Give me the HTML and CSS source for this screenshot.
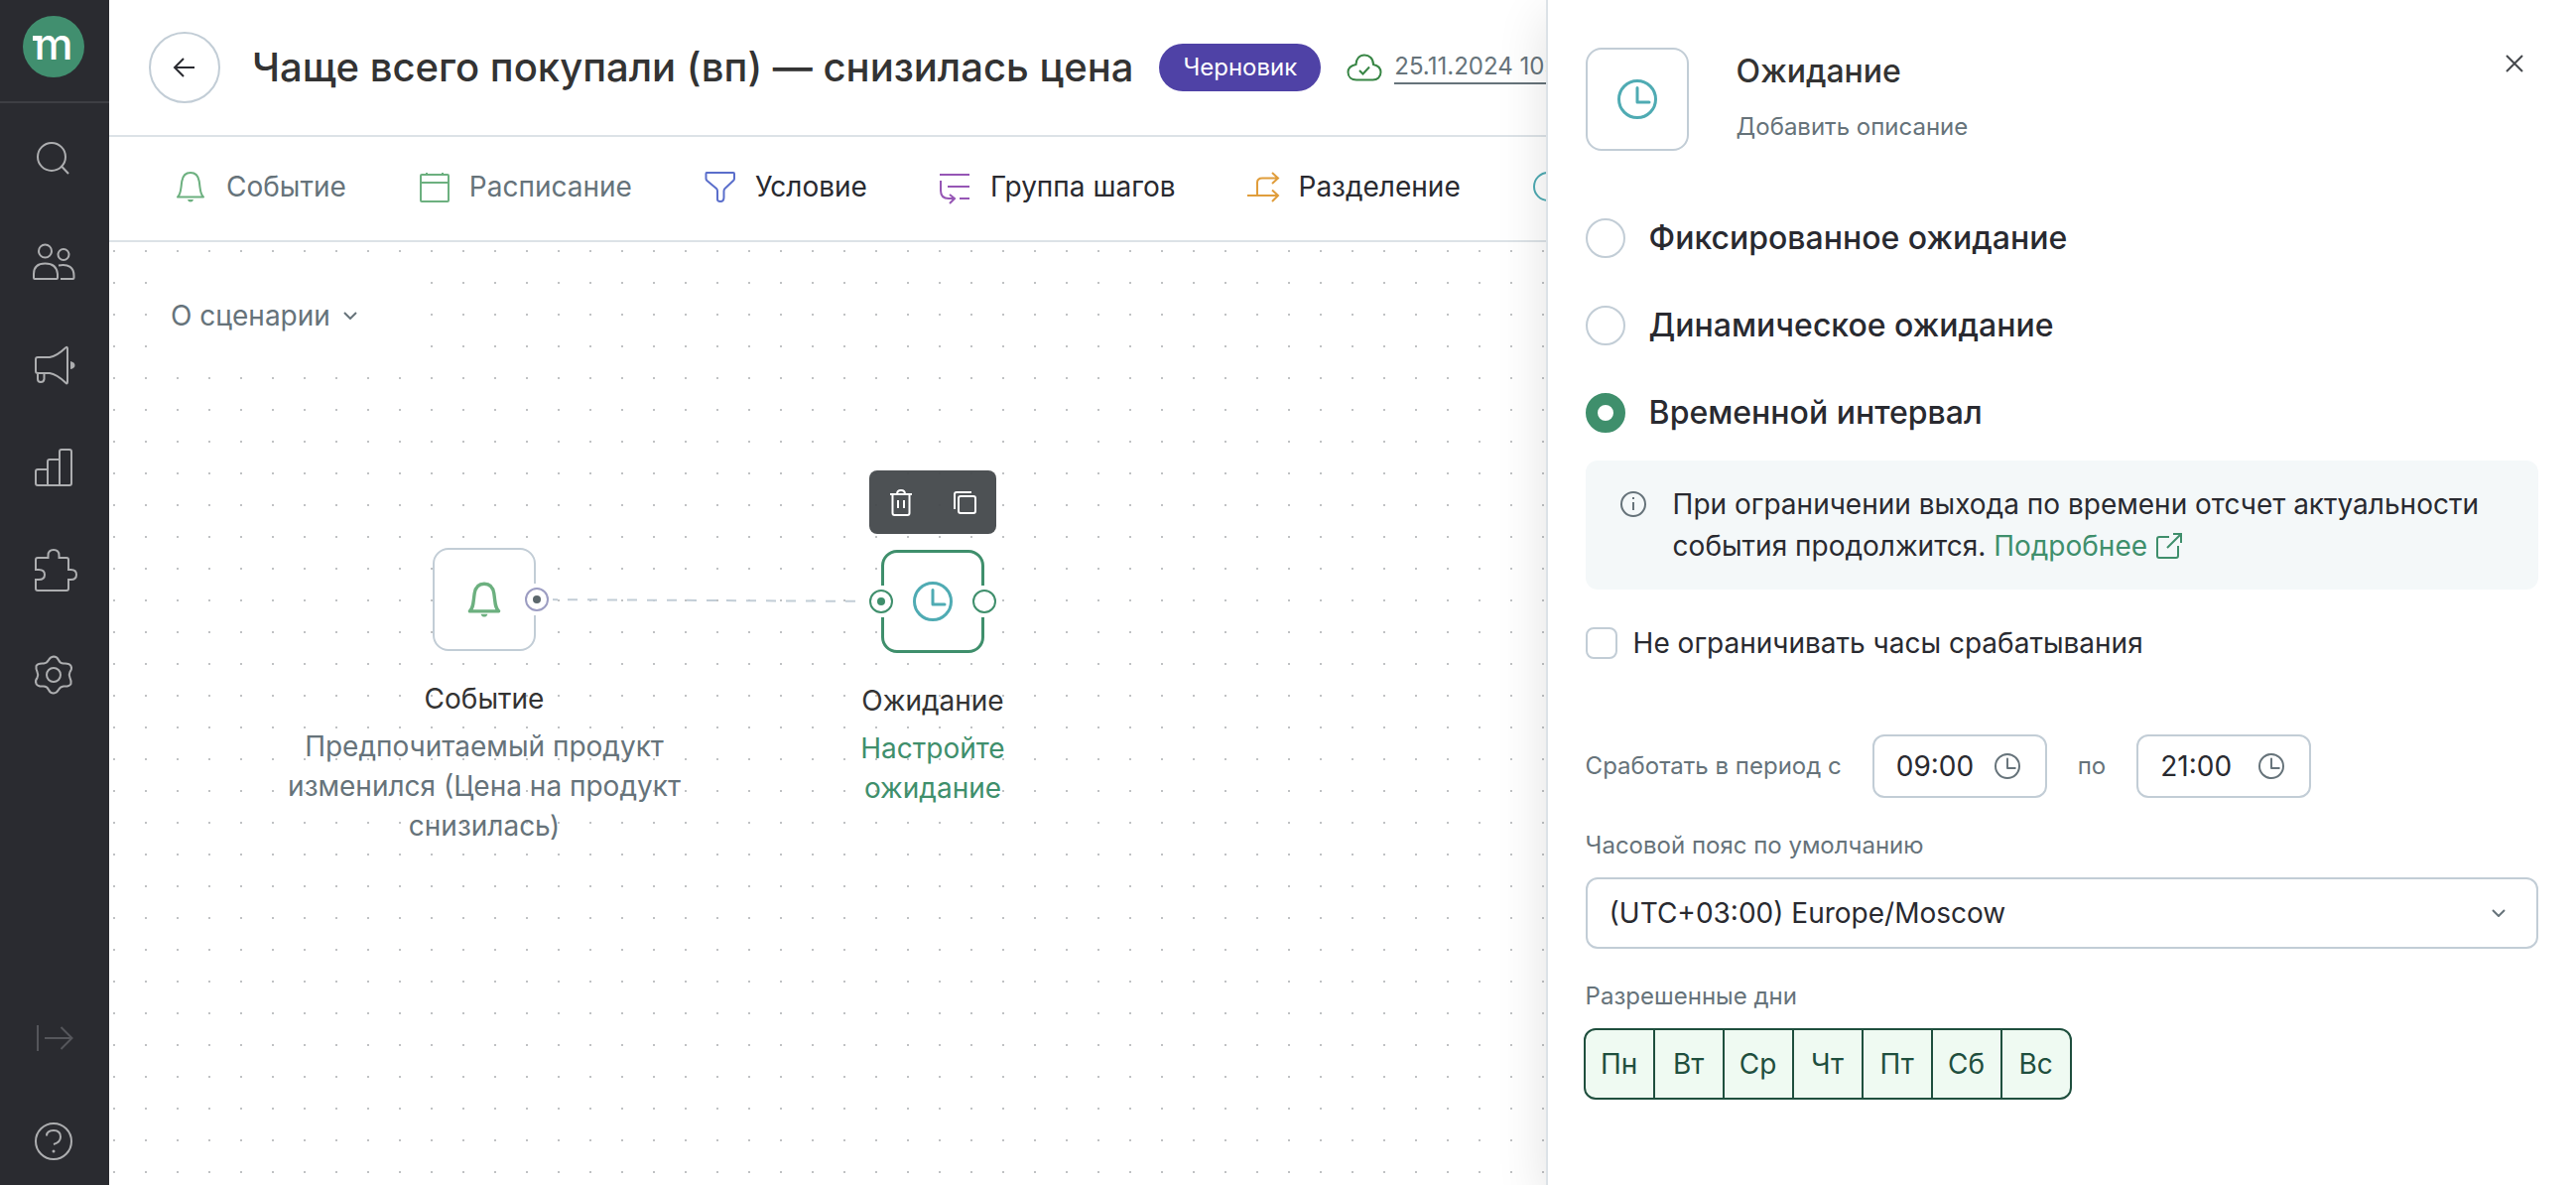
FILE: index.html
```html
<!DOCTYPE html>
<html lang="ru">
<head>
<meta charset="utf-8">
<meta name="viewport" content="width=device-width, initial-scale=1">
<title>Чаще всего покупали (вп) — снизилась цена</title>
<link rel="stylesheet" href="styles.css">
</head>
<body>
<svg class="defs" aria-hidden="true">
  <symbol id="clock" viewBox="0 0 40 40">
    <circle cx="20" cy="20" r="18.5" stroke-width="3"/>
    <path d="M20 8.500V23H32" stroke-width="3" stroke-linecap="round" stroke-linejoin="round"/>
  </symbol>
  <symbol id="bell" viewBox="0 0 32 32">
    <path d="M3 26.500H29C25.500 23.500 26 19 24.700 10.500C23.800 5 21 2 16 2S8.200 5 7.300 10.500C6 19 6.500 23.500 3 26.500Z" stroke-linejoin="round"/>
    <path d="M13 29H19Q18.500 31.500 16 31.500T13 29Z" fill="currentColor" stroke="none"/>
  </symbol>
  <symbol id="chevron" viewBox="0 0 14 8">
    <path d="M1 1L7 7L13 1" stroke-width="2"/>
  </symbol>
</svg>

<div class="app">
  <aside class="sidebar">
    <a class="logo" href="#" aria-label="Главная">
      <svg viewBox="0 0 62 62" width="62" height="62">
        <circle cx="31" cy="31" r="31" class="logo-disc"/>
        <text x="31" y="44" class="logo-letter">m</text>
        <rect x="10" y="20" width="8" height="5" class="logo-serif"/>
      </svg>
    </a>
    <nav class="nav">
      <a href="#" aria-label="Поиск"><svg viewBox="0 0 44 44"><circle cx="20" cy="20" r="14"/><path d="M29.500 29L37 37"/></svg></a>
      <a href="#" aria-label="Клиенты"><svg viewBox="0 0 44 44"><circle cx="13.500" cy="11" r="6.500"/><circle cx="32" cy="14.500" r="5.500"/><path d="M2 38V34Q2 23.500 13.500 23.500T26 34V38Q26 39 25 39H3Q2 39 2 38ZM27 25.500Q42.500 23 42.500 36V38Q42.500 39 41.500 39H29"/></svg></a>
      <a href="#" aria-label="Кампании"><svg viewBox="0 0 44 44"><path d="M4 16Q4 14 6 14H18Q25 13 34 4.500Q36 3 36 5V39Q36 41.500 34 39.500Q25 31 18 30H6Q4 30 4 28ZM6 30V36Q6 39 9 39T12.500 36V30"/><path d="M39 18Q43.500 19 43.500 22T39 26Z" class="solid"/></svg></a>
      <a href="#" aria-label="Отчёты"><svg viewBox="0 0 44 44"><path d="M4 25Q4 23 6 23H16V15Q16 13 18 13H28V5Q28 3 30 3H38Q40 3 40 5V37Q40 39 38 39H6Q4 39 4 37ZM16 23V39M28 13V39"/></svg></a>
      <a href="#" aria-label="Интеграции"><svg viewBox="0 0 44 44"><path d="M6 8H16.500V5.500Q16.500 0 22 0T27.500 5.500V8H35Q37 8 37 10V20H39.500Q45 20 45 25T39.500 30H37V39Q37 41 35 41H6Q4 41 4 39V30H7Q13 30 13 25T7 20H4V10Q4 8 6 8Z"/></svg></a>
      <a href="#" aria-label="Настройки"><svg viewBox="0 0 44 44"><circle cx="22" cy="22" r="7"/><path d="M22 3.500Q25.500 3.500 27 7T32 10.500Q38 10 39.500 13T38.500 19Q37 22 38.500 25T39.500 31Q38 34 32 33.500Q28.500 34 27 37T22 40.500Q18.500 40.500 17 37T12 33.500Q6 34 4.500 31T5.500 25Q7 22 5.500 19T4.500 13Q6 10 12 10.500Q15.500 10 17 7T22 3.500Z"/></svg></a>
    </nav>
    <nav class="nav nav-bottom">
      <a href="#" class="dim" aria-label="Развернуть меню"><svg viewBox="0 0 44 44"><path d="M6 9V35M13 22H40M29.500 11L40.500 22L29.500 33"/></svg></a>
      <a href="#" aria-label="Помощь"><svg viewBox="0 0 44 44"><circle cx="22" cy="22" r="18"/><path d="M15 16.500Q15 11 22 11T29 17.500Q29 23 22 25"/><circle cx="22" cy="32" r="1.500" class="solid"/></svg></a>
    </nav>
  </aside>

  <main class="main">
    <header class="header">
      <button class="back" aria-label="Назад"><svg viewBox="0 0 24 20" width="24" height="20"><path d="M22 10H2M11 1L2 10L11 19" stroke-width="2"/></svg></button>
      <h1 class="title">Чаще всего покупали (вп) — снизилась цена</h1>
      <span class="badge">Черновик</span>
      <div class="saved">
        <svg viewBox="0 0 36 28" width="36" height="28"><path d="M10 26.500H26.500C31 26.500 34.500 23.500 34.500 18.800C34.500 14.500 31.500 12 27 11C27 5 23 1.500 18 1.500S9.500 5.500 9.500 11C4.500 12 1.500 14.500 1.500 18.800C1.500 23.500 5 26.500 10 26.500ZM13 17L16.500 20.500L23 13.500" stroke-width="2"/></svg>
        <a href="#">25.11.2024 10:00</a>
      </div>
    </header>

    <div class="toolbar">
      <button class="tool muted"><svg class="green thin"><use href="#bell"/></svg>Событие</button>
      <button class="tool muted"><svg class="green" viewBox="0 0 32 32"><path d="M4 4H30Q31 4 31 5V30Q31 31 30 31H4Q3 31 3 30V5Q3 4 4 4ZM3 12H31M9 2V4M25 2V4" stroke-width="2"/></svg>Расписание</button>
      <button class="tool"><svg class="blue" viewBox="0 0 32 32"><path d="M3 2H30Q31 2 31 3V8Q31 9 30 10L21.500 18Q20.500 19 20.500 20.500V27Q20.500 31 17 31T14 28V20.500Q14 19 13 18L3.500 10Q2.500 9 2.500 8V3Q2.500 2 3 2Z" stroke-width="2"/></svg>Условие</button>
      <button class="tool"><svg class="purple" viewBox="0 0 32 32"><path d="M1 4H31M9 16H31M21 28H31M2 10V20Q2 28 10 28H16M11 24L16 28L11 33" stroke-width="2"/></svg>Группа шагов</button>
      <button class="tool"><svg class="orange" viewBox="0 0 32 32"><path d="M0 25H31M10 25V12Q10 7.500 15 7.500H31M25 2L31 7.500L25 13M25 19.500L31 25L25 31" stroke-width="2"/></svg>Разделение</button>
      <button class="tool"><svg class="teal" viewBox="0 0 32 32"><circle cx="16" cy="16" r="14" stroke-width="2"/><path d="M16 8V18H24" stroke-width="2"/></svg>Ожидание</button>
    </div>

    <div class="canvas">
      <button class="about">О сценарии <svg width="14" height="8"><use href="#chevron"/></svg></button>

      <svg class="edge" width="348" height="8" viewBox="0 0 348 8"><path d="M0 3L348 5" stroke-width="2" stroke-dasharray="10 10" stroke-dashoffset="8"/></svg>

      <div class="node node-event">
        <div class="card">
          <svg class="green bold" width="36" height="36"><use href="#bell"/></svg>
          <span class="port port-right linked"></span>
        </div>
        <div class="node-title">Событие</div>
        <div class="node-text">Предпочитаемый продукт изменился (Цена на продукт снизилась)</div>
      </div>

      <div class="node node-wait">
        <div class="card">
          <svg class="teal" width="40" height="40"><use href="#clock"/></svg>
          <span class="port port-left linked"></span>
          <span class="port port-right"></span>
        </div>
        <div class="node-title">Ожидание</div>
        <div class="node-text">Настройте ожидание</div>
        <div class="node-menu">
          <button aria-label="Удалить"><svg viewBox="0 0 24 28" width="24" height="28"><path d="M1 6H23M3.500 6V25Q3.500 27 5.500 27H18.500Q20.500 27 20.500 25V6M8 6Q8 2 12 2T16 6M9 12V20M15 12V20" stroke-width="2"/></svg></button>
          <button aria-label="Копировать"><svg viewBox="0 0 24 24" width="24" height="24"><path d="M2 19V4Q2 2 4 2H19" stroke-width="2"/><rect x="6" y="6" width="17" height="17" rx="2" stroke-width="2"/></svg></button>
        </div>
      </div>
    </div>
  </main>

  <section class="panel" aria-label="Ожидание">
    <div class="panel-head">
      <div class="panel-icon"><svg class="teal" width="40" height="40"><use href="#clock"/></svg></div>
      <div class="panel-names">
        <h2>Ожидание</h2>
        <p>Добавить описание</p>
      </div>
      <button class="close" aria-label="Закрыть"><svg viewBox="0 0 18 18" width="18" height="18"><path d="M1 1L17 17M17 1L1 17" stroke-width="2"/></svg></button>
    </div>

    <div class="modes">
      <label class="mode"><input type="radio" name="mode">Фиксированное ожидание</label>
      <label class="mode"><input type="radio" name="mode">Динамическое ожидание</label>
      <label class="mode"><input type="radio" name="mode" checked>Временной интервал</label>
    </div>

    <div class="note">
      <svg viewBox="0 0 28 28" width="28" height="28"><circle cx="14" cy="14" r="12" stroke-width="2"/><path d="M14 12V20M14 7V9" stroke-width="2"/></svg>
      <p>При ограничении выхода по времени отсчет актуальности события продолжится. <a href="#">Подробнее <svg viewBox="0 0 28 28" width="28" height="28"><path d="M14 5H4Q2 5 2 7V24Q2 26 4 26H21Q23 26 23 24V14M18 2H26V11M26 2L12 16" stroke-width="2"/></svg></a></p>
    </div>

    <label class="limit"><input type="checkbox">Не ограничивать часы срабатывания</label>

    <div class="period">
      <label for="from">Сработать в период с</label>
      <span class="time"><input id="from" type="text" value="09:00"><svg width="26" height="26"><use href="#clock"/></svg></span>
      <label for="to">по</label>
      <span class="time"><input id="to" type="text" value="21:00"><svg width="26" height="26"><use href="#clock"/></svg></span>
    </div>

    <div class="field">
      <label for="zone">Часовой пояс по умолчанию</label>
      <span class="select">
        <select id="zone"><option>(UTC+03:00) Europe/Moscow</option></select>
        <svg width="14" height="8"><use href="#chevron"/></svg>
      </span>
    </div>

    <div class="field">
      <span id="days-label">Разрешенные дни</span>
      <div class="days" role="group" aria-labelledby="days-label">
        <button aria-pressed="true">Пн</button>
        <button aria-pressed="true">Вт</button>
        <button aria-pressed="true">Ср</button>
        <button aria-pressed="true">Чт</button>
        <button aria-pressed="true">Пт</button>
        <button aria-pressed="true">Сб</button>
        <button aria-pressed="true">Вс</button>
      </div>
    </div>
  </section>
</div>
</body>
</html>
```
FILE: styles.css
```css
:root {
  --ink: #292a30;
  --title: #333333;
  --muted: #66737a;
  --line: #dce2e7;
  --border: #c2cdd6;
  --brand: #3f8f6c;
}

* { box-sizing: border-box; }

body {
  margin: 0;
  font: 28px/40px Inter, "Liberation Sans", sans-serif;
  color: var(--ink);
  background: #fff;
}

h1, h2, p { margin: 0; font-weight: inherit; }

button {
  font: inherit;
  color: inherit;
  background: none;
  border: 0;
  padding: 0;
}

a { color: inherit; text-decoration: none; }

svg { fill: none; stroke: currentColor; flex: none; display: block; }
.defs { position: absolute; width: 0; height: 0; }

.green { color: #6cb07f; }
.blue { color: #5a6ecb; }
.purple { color: #9656b5; }
.orange { color: #e09d3b; }
.teal { color: #4fabb3; }
.thin { stroke-width: 2; }
.bold { stroke-width: 3; }

.app {
  position: relative;
  display: flex;
  min-height: 100vh;
  overflow: hidden;
}

/* Sidebar */
.sidebar {
  flex: none;
  width: 110px;
  display: flex;
  flex-direction: column;
  background: #2a2b30;
  color: #adaeb0;
}

.logo {
  height: 104px;
  padding: 16px 0 0 23px;
  border-bottom: 2px solid #3d3e43;
}
.logo svg { stroke: none; }
.logo-disc { fill: #418f6f; }
.logo-serif { fill: #fff; }
.logo-letter {
  fill: #fff;
  font-size: 44px;
  font-weight: 500;
  text-anchor: middle;
}

.nav {
  display: flex;
  flex-direction: column;
  align-items: center;
  gap: 60px;
  padding: 34px 2px 0 0;
}
.nav svg { width: 44px; height: 44px; stroke-width: 2; overflow: visible; }
.nav .solid { fill: currentColor; stroke: none; }
.nav .dim { color: #55565b; }
.nav-bottom { margin-top: auto; padding-bottom: 22px; }

/* Main column */
.main {
  flex: 1;
  min-width: 0;
  display: flex;
  flex-direction: column;
}

.header {
  display: flex;
  align-items: center;
  height: 138px;
  padding-left: 40px;
  border-bottom: 2px solid var(--line);
  white-space: nowrap;
}
.back {
  flex: none;
  display: grid;
  place-items: center;
  width: 72px;
  height: 72px;
  margin-right: 32px;
  border: 2px solid var(--border);
  border-radius: 50%;
}
.title {
  font-size: 40px;
  line-height: 48px;
  font-weight: 500;
  color: var(--title);
}
.badge {
  margin: 0 26px;
  padding: 0 24px;
  font-size: 24px;
  line-height: 48px;
  color: #fff;
  background: #4f42a6;
  border-radius: 24px;
}
.saved {
  display: flex;
  align-items: center;
  gap: 12px;
  font-size: 24px;
  line-height: 32px;
  color: var(--muted);
}
.saved svg { color: #378544; }
.saved a { border-bottom: 2px solid var(--muted); }

.toolbar {
  display: flex;
  align-items: center;
  gap: 72px;
  height: 106px;
  padding: 0 0 4px 66px;
  border-bottom: 2px solid var(--line);
}
.tool {
  display: flex;
  align-items: center;
  gap: 20px;
  white-space: nowrap;
}
.tool svg { width: 32px; height: 32px; overflow: visible; }
.muted { color: var(--muted); }

/* Scenario canvas */
.canvas {
  position: relative;
  flex: 1;
  padding: 20px 42px;
  background: radial-gradient(circle at 5px 9px, #c0c2c4 1px, transparent 1px) 0 0 / 32px 32px #fff;
}
.about {
  display: flex;
  align-items: center;
  gap: 13px;
  width: 276px;
  height: 108px;
  padding: 0 20px;
  color: var(--muted);
  background: #fff;
}

.edge { position: absolute; left: 430px; top: 357px; color: var(--border); }

.node {
  position: absolute;
  display: flex;
  flex-direction: column;
  align-items: center;
  text-align: center;
}
.node-event { left: 168px; top: 308px; width: 420px; }
.node-wait { left: 710px; top: 310px; width: 240px; color: var(--brand); }

.card {
  position: relative;
  display: grid;
  place-items: center;
  width: 104px;
  height: 104px;
  margin-bottom: 28px;
  background: #fff;
  border: 2px solid var(--border);
  border-radius: 16px;
}
.node-wait .card { border: 3px solid var(--brand); }

.port {
  position: absolute;
  display: grid;
  place-items: center;
  width: 32px;
  height: 32px;
  background: #fff;
  color: #5c686d;
}
.port::before {
  content: "";
  grid-area: 1 / 1;
  width: 20px;
  height: 20px;
  border: 2px solid #9c9dc2;
  border-radius: 50%;
}
.port.linked::after {
  content: "";
  grid-area: 1 / 1;
  width: 8px;
  height: 8px;
  border-radius: 50%;
  background: currentColor;
}
.node-wait .port { color: var(--brand); }
.node-wait .port::before { border-color: currentColor; }
.port-left { left: -19px; }
.port-right { right: -19px; }

.node-title { margin-bottom: 8px; color: var(--title); }
.node-event .node-text { color: var(--muted); }

.node-menu {
  position: absolute;
  top: -80px;
  display: flex;
  width: 128px;
  height: 64px;
  color: #fff;
  background: rgba(67, 72, 75, 0.95);
  border-radius: 8px;
}
.node-menu button { flex: 1; display: grid; place-items: center; }

/* Settings drawer */
.panel {
  position: absolute;
  top: 0;
  right: 0;
  bottom: 0;
  width: 40%;
  padding: 48px 38px 0 38px;
  background: #fff;
  border-left: 2px solid var(--line);
  box-shadow: 0 16px 48px rgba(0, 0, 0, 0.12);
}

.panel-head { display: flex; }
.panel-icon {
  display: grid;
  place-items: center;
  width: 104px;
  height: 104px;
  border: 2px solid var(--border);
  border-radius: 16px;
}
.panel-names { flex: 1; padding: 4px 0 0 48px; }
.panel-names h2 {
  font-size: 32px;
  font-weight: 500;
  color: var(--title);
}
.panel-names p {
  margin-top: 20px;
  font-size: 24px;
  line-height: 32px;
  color: var(--muted);
}
.close { align-self: start; padding: 7px 15px; color: #45484c; }

.modes {
  display: flex;
  flex-direction: column;
  gap: 48px;
  margin-top: 68px;
  font-size: 32px;
  font-weight: 500;
}
.mode { display: flex; align-items: center; gap: 24px; }

.mode input, .limit input {
  appearance: none;
  flex: none;
  margin: 0;
  background: #fff;
  border: 2px solid var(--border);
}
.mode input { width: 40px; height: 40px; border-radius: 50%; }
.mode input:checked { border: 12px solid var(--brand); }

.note {
  display: flex;
  gap: 26px;
  margin-top: 28px;
  padding: 23px 34px;
  line-height: 42px;
  background: #f4f8f9;
  border-radius: 12px;
}
.note > svg { margin-top: 7px; color: var(--muted); }
.note a { color: var(--brand); white-space: nowrap; }
.note a svg { display: inline-block; vertical-align: -4px; }

.limit { display: flex; align-items: center; gap: 16px; margin-top: 34px; }
.limit input { width: 32px; height: 32px; border-radius: 8px; }

.period {
  display: flex;
  align-items: center;
  gap: 31px;
  margin-top: 72px;
  font-size: 24px;
  color: var(--muted);
}
.time {
  display: flex;
  align-items: center;
  width: 176px;
  height: 64px;
  padding: 0 25px 0 22px;
  border: 2px solid var(--border);
  border-radius: 12px;
}
.time input {
  flex: 1;
  min-width: 0;
  padding: 0;
  border: 0;
  font: inherit;
  font-size: 28px;
  color: var(--ink);
  background: none;
}

.field {
  display: flex;
  flex-direction: column;
  gap: 16px;
  margin-top: 32px;
  font-size: 24px;
  line-height: 32px;
  color: var(--muted);
}
.select { display: grid; align-items: center; font-size: 28px; }
.select select {
  grid-area: 1 / 1;
  appearance: none;
  height: 72px;
  padding: 0 64px 0 22px;
  font: inherit;
  color: var(--ink);
  background: #fff;
  border: 2px solid var(--border);
  border-radius: 12px;
}
.select svg {
  grid-area: 1 / 1;
  justify-self: end;
  margin-right: 33px;
  pointer-events: none;
}

.days {
  align-self: start;
  display: flex;
  height: 72px;
  margin-left: -2px;
  font-size: 28px;
  color: #1f4f3e;
  background: #effaf2;
  border: 2px solid currentColor;
  border-radius: 12px;
}
.days button { width: 70px; border-right: 2px solid currentColor; }
.days button:last-child { width: 68px; border-right: 0; }
```
